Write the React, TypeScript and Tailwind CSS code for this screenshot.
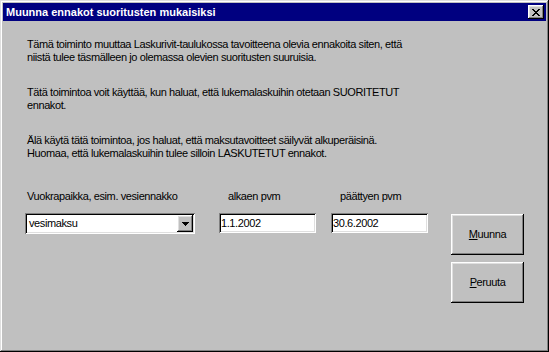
import React from 'react';

const raised =
  'shadow-[inset_-1px_-1px_#000,inset_1px_1px_#fff,inset_-2px_-2px_#808080,inset_2px_2px_#dfdfdf]';
const sunken =
  'shadow-[inset_1px_1px_#808080,inset_-1px_-1px_#fff,inset_2px_2px_#000,inset_-2px_-2px_#dfdfdf]';

const TitleClose = () => (
  <div className={`w-[16px] h-[14px] bg-[#c0c0c0] flex items-center justify-center ${raised}`}>
    <svg width="8" height="7" viewBox="0 0 8 7" shapeRendering="crispEdges">
      <path d="M0 0h2v1H0zM6 0h2v1H6zM1 1h2v1H1zM5 1h2v1H5zM2 2h4v1H2zM3 3h2v1H3zM2 4h4v1H2zM1 5h2v1H1zM5 5h2v1H5zM0 6h2v1H0zM6 6h2v1H6z" fill="#000" />
    </svg>
  </div>
);

const DropButton = () => (
  <div className={`w-[16px] h-[17px] bg-[#c0c0c0] flex items-center justify-center ${raised}`}>
    <svg width="7" height="4" viewBox="0 0 7 4" shapeRendering="crispEdges">
      <path d="M0 0h7v1H0zM1 1h5v1H1zM2 2h3v1H2zM3 3h1v1H3z" fill="#000" />
    </svg>
  </div>
);

const PushButton = ({ hot, rest }: { hot: string; rest: string }) => (
  <div className={`w-[73px] h-[41px] bg-[#c0c0c0] flex items-center justify-center ${raised}`}>
    <span>
      <span className="underline underline-offset-[1px]">{hot}</span>
      {rest}
    </span>
  </div>
);

export default function App() {
  return (
    <div
      className={`w-[549px] h-[352px] bg-[#c0c0c0] p-[3px] flex flex-col text-black text-[11px] leading-[13px] tracking-[-0.4px] font-['Liberation_Sans',Arial,sans-serif] shadow-[inset_-1px_-1px_#000,inset_1px_1px_#dfdfdf,inset_-2px_-2px_#808080,inset_2px_2px_#fff]`}
    >
      <div className="h-[18px] bg-[#000080] flex items-center pl-[3px] pr-[2px]">
        <span className="font-bold text-white tracking-normal">Muunna ennakot suoritusten mukaisiksi</span>
        <div className="ml-auto">
          <TitleClose />
        </div>
      </div>

      <div className="pl-[22px] pt-[17px]">
        <p className="pl-[2px]">
          Tämä toiminto muuttaa Laskurivit-taulukossa tavoitteena olevia ennakoita siten, että
          <br />
          niistä tulee täsmälleen jo olemassa olevien suoritusten suuruisia.
        </p>
        <p className="pl-[2px] mt-[22px]">
          Tätä toimintoa voit käyttää, kun haluat, että lukemalaskuihin otetaan SUORITETUT
          <br />
          ennakot.
        </p>
        <p className="pl-[2px] mt-[22px]">
          Älä käytä tätä toimintoa, jos haluat, että maksutavoitteet säilyvät alkuperäisinä.
          <br />
          Huomaa, että lukemalaskuihin tulee silloin LASKUTETUT ennakot.
        </p>

        <div className="mt-[30px] flex">
          <div className="w-[170px] flex flex-col">
            <span className="pl-[2px]">Vuokrapaikka, esim. vesiennakko</span>
            <div className={`mt-[10px] h-[21px] bg-white flex items-center pl-[4px] pr-[2px] ${sunken}`}>
              <span>vesimaksu</span>
              <div className="ml-auto">
                <DropButton />
              </div>
            </div>
          </div>

          <div className="ml-[24px] w-[97px] flex flex-col">
            <span className="pl-[9px]">alkaen pvm</span>
            <div className={`mt-[10px] h-[20px] bg-white flex items-center pl-[2px] ${sunken}`}>
              1.1.2002
            </div>
          </div>

          <div className="ml-[15px] w-[97px] flex flex-col">
            <span className="pl-[9px]">päättyen pvm</span>
            <div className={`mt-[10px] h-[20px] bg-white flex items-center pl-[2px] ${sunken}`}>
              30.6.2002
            </div>
          </div>

          <div className="ml-[23px] mt-[24px] flex flex-col gap-[7px]">
            <PushButton hot="M" rest="uunna" />
            <PushButton hot="P" rest="eruuta" />
          </div>
        </div>
      </div>
    </div>
  );
}
